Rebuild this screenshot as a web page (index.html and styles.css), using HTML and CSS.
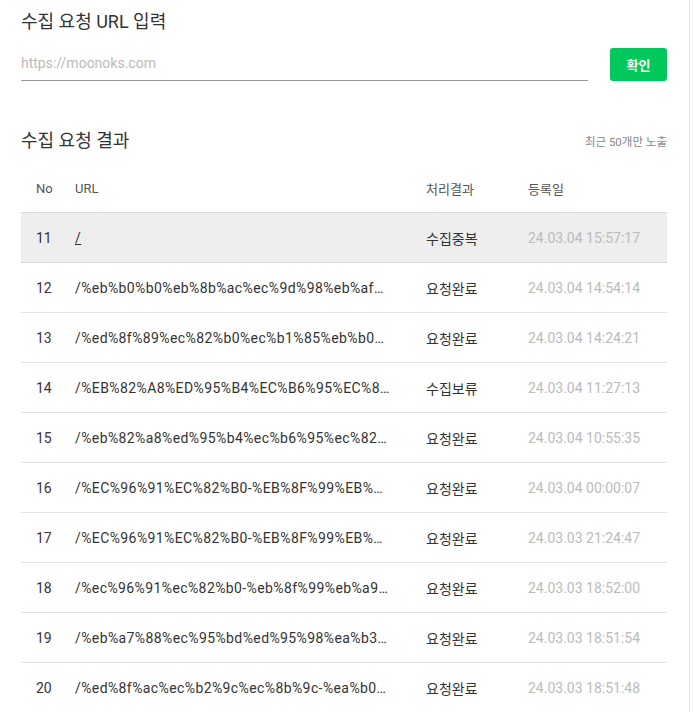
FILE: index.html
```html
<!DOCTYPE html>
<html lang="ko">
<head>
<meta charset="utf-8">
<link rel="stylesheet" href="styles.css">
</head>
<body>
<div class="wrap">
  <section class="req">
    <h2 class="title">수집 요청 URL 입력</h2>
    <div class="form">
      <div class="field"><span class="ph">https://moonoks.com</span></div>
      <button class="btn">확인</button>
    </div>
  </section>
  <section class="result">
    <div class="head">
      <h2 class="title">수집 요청 결과</h2>
      <span class="note">최근 50개만 노출</span>
    </div>
    <div class="table">
      <div class="row th"><span class="c-no">No</span><span class="c-url">URL</span><span class="c-st">처리결과</span><span class="c-dt">등록일</span></div>
      <div class="row on"><span class="c-no">11</span><span class="c-url"><u>/</u></span><span class="c-st">수집중복</span><span class="c-dt">24.03.04 15:57:17</span></div>
      <div class="row"><span class="c-no">12</span><span class="c-url">/%eb%b0%b0%eb%8b%ac%ec%9d%98%eb%af…</span><span class="c-st">요청완료</span><span class="c-dt">24.03.04 14:54:14</span></div>
      <div class="row"><span class="c-no">13</span><span class="c-url">/%ed%8f%89%ec%82%b0%ec%b1%85%eb%b0…</span><span class="c-st">요청완료</span><span class="c-dt">24.03.04 14:24:21</span></div>
      <div class="row"><span class="c-no">14</span><span class="c-url">/%EB%82%A8%ED%95%B4%EC%B6%95%EC%8…</span><span class="c-st">수집보류</span><span class="c-dt">24.03.04 11:27:13</span></div>
      <div class="row"><span class="c-no">15</span><span class="c-url">/%eb%82%a8%ed%95%b4%ec%b6%95%ec%82…</span><span class="c-st">요청완료</span><span class="c-dt">24.03.04 10:55:35</span></div>
      <div class="row"><span class="c-no">16</span><span class="c-url">/%EC%96%91%EC%82%B0-%EB%8F%99%EB%…</span><span class="c-st">요청완료</span><span class="c-dt">24.03.04 00:00:07</span></div>
      <div class="row"><span class="c-no">17</span><span class="c-url">/%EC%96%91%EC%82%B0-%EB%8F%99%EB%…</span><span class="c-st">요청완료</span><span class="c-dt">24.03.03 21:24:47</span></div>
      <div class="row"><span class="c-no">18</span><span class="c-url">/%ec%96%91%ec%82%b0-%eb%8f%99%eb%a9…</span><span class="c-st">요청완료</span><span class="c-dt">24.03.03 18:52:00</span></div>
      <div class="row"><span class="c-no">19</span><span class="c-url">/%eb%a7%88%ec%95%bd%ed%95%98%ea%b3…</span><span class="c-st">요청완료</span><span class="c-dt">24.03.03 18:51:54</span></div>
      <div class="row"><span class="c-no">20</span><span class="c-url">/%ed%8f%ac%ec%b2%9c%ec%8b%9c-%ea%b0…</span><span class="c-st">요청완료</span><span class="c-dt">24.03.03 18:51:48</span></div>
    </div>
  </section>
</div>
</body>
</html>
```

FILE: styles.css
```css
html, body {
  margin: 0;
  padding: 0;
  background: #fff;
}
body {
  font-family: Roboto, "Noto Sans CJK KR", sans-serif;
  color: #333;
}
.wrap {
  width: 646px;
  padding: 0 22px 0 21px;
  border-right: 1px solid #e6e6e6;
  min-height: 712px;
}
.title {
  margin: 0;
  font-size: 18px;
  font-weight: 400;
  color: #333;
  line-height: 26px;
}
.req {
  padding-top: 9px;
}
.form {
  display: flex;
  align-items: flex-end;
  gap: 22px;
  margin-top: 11px;
}
.field {
  flex: 1;
  height: 34px;
  border-bottom: 1px solid #999;
  display: flex;
  align-items: center;
}
.ph {
  font-size: 14px;
  color: #bbb;
}
.btn {
  width: 57px;
  height: 33px;
  border: 0;
  border-radius: 3px;
  background: #00c85a;
  color: #fff;
  font-family: "Noto Sans CJK KR", sans-serif;
  font-size: 13px;
  font-weight: 700;
  padding: 0;
}
.result {
  margin-top: 47px;
}
.head {
  display: flex;
  justify-content: space-between;
  align-items: center;
}
.note {
  font-size: 11.5px;
  color: #888;
}
.table {
  margin-top: 10px;
}
.row {
  display: grid;
  grid-template-columns: 54px 351px 102px 139px;
  align-items: center;
  height: 49px;
  border-bottom: 1px solid #e2e2e2;
  font-size: 14px;
}
.row.th {
  height: 48px;
  border-bottom-color: #dcdcdc;
  color: #555;
  font-size: 13px;
}
.row.on {
  background: #eee;
  border-bottom-color: #d8d8d8;
}
.c-no {
  padding-left: 15px;
  color: #3a2f45;
}
.th .c-no {
  color: #555;
}
.c-url {
  white-space: nowrap;
  font-size: 14px;
  letter-spacing: 0.4px;
}
.th .c-url {
  font-size: 13px;
  letter-spacing: 0;
}
.c-st {
  color: #333;
}
.c-dt {
  color: #bbb;
}
.th .c-dt, .th .c-st, .th .c-url {
  color: #555;
}
```
